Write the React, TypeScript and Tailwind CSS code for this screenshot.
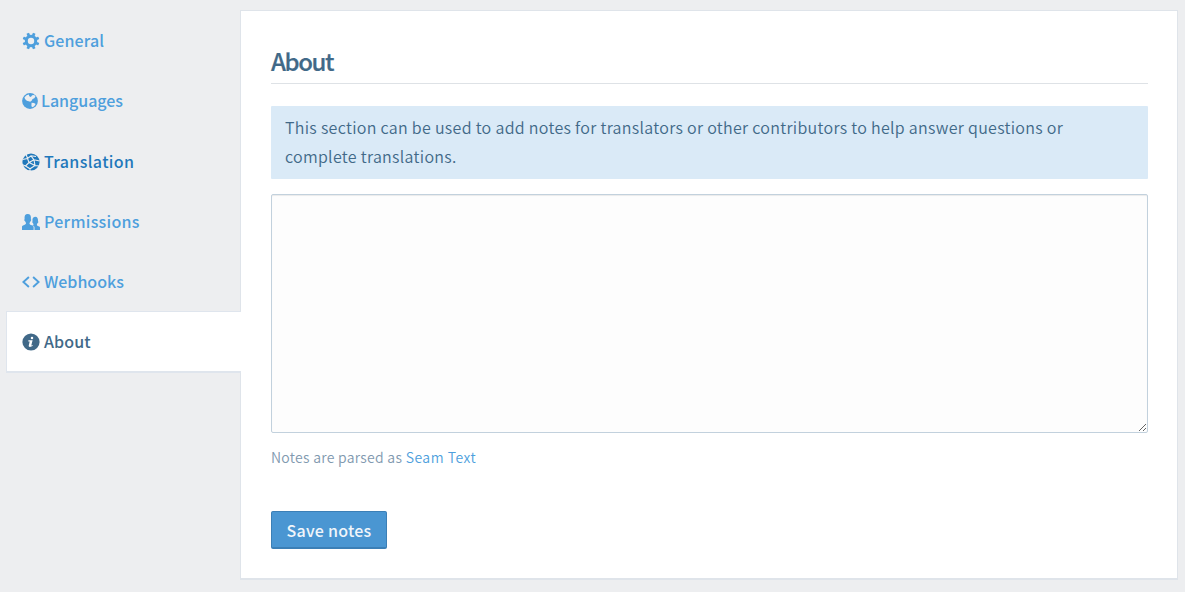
import type { ReactNode } from 'react';

function Gear() {
  return (
    <svg width="18" height="18" viewBox="0 0 18 18" className="shrink-0">
      <g className="fill-current">
        <circle cx="9" cy="9" r="6.200" />
        {[22.5, 67.5, 112.5, 157.5].map((angle) => (
          <rect key={angle} x="7.600" y="0.600" width="2.800" height="16.800" rx="0.500" transform={`rotate(${angle} 9 9)`} />
        ))}
      </g>
      <circle cx="9" cy="9" r="3.200" fill="#edeef0" />
    </svg>
  );
}

function Globe() {
  return (
    <svg width="16" height="18" viewBox="0 0 16 18" className="shrink-0">
      <circle cx="8" cy="9" r="7.900" className="fill-current" />
      <path
        fill="#edeef0"
        d="M4.600 3.300 6.800 2.500 7.300 4.300 8.800 4.900 10.200 3.200 12.200 3 13.500 4.600 12.300 6.300 10.600 6.900 9.600 8.700 8.200 9.800 6.700 9.200 4.800 8.700 3 7 2.500 5.200z"
      />
      <path fill="#edeef0" d="M9.600 10.800 12 10.900 13.600 12.100 12.400 13.900 10.600 15.300 9.400 14.200z" />
    </svg>
  );
}

function Network() {
  return (
    <svg width="18" height="18" viewBox="0 0 18 18" className="relative top-px shrink-0">
      <circle cx="9" cy="9" r="8.600" className="fill-current" />
      <g fill="none" stroke="#edeef0" strokeWidth="1.100">
        <path d="M.5 6.500 5.500 5.500 9 2.800 14 3.500M5.500 5.500 7 9.500 12 6.800 9 2.800M12 6.800 13 12.500 7 9.500 3.500 13 0 11.500M3.500 13 8 15.800 13 12.500 17 13M12 6.800 17.500 8M5.500 5.500 4 1M8 15.800 8 18" />
      </g>
    </svg>
  );
}

function Users() {
  return (
    <svg width="18" height="18" viewBox="0 0 18 18" className="relative top-px shrink-0 fill-current">
      <path d="M0 17v-3.200c0-.8.5-1.200 1.600-1.600 1.700-.6 2.400-1 2.400-1.900 0-.7-.6-1.100-.9-2-.6-.2-.8-.7-.8-1.300 0-.4.100-.6.300-.8C2.200 3 3.200 1.100 5.700 1.100S9.300 3 8.900 6.200c.2.200.3.500.3.900 0 .600-.3 1.100-.8 1.300-.3.900-.9 1.300-.9 2 0 .9.700 1.300 2.400 1.900 1.200.4 1.700.9 1.700 1.700v3z" />
      <path d="M12.500 17h5.500v-2.400c0-.7-.4-1.100-1.400-1.400-1.300-.5-1.700-.9-1.700-1.500 0-.6.5-.900.7-1.600.5-.2.7-.6.7-1.100 0-.3-.1-.5-.3-.700.3-2.700-.7-4.500-2.700-4.500-1.500 0-2.600.9-2.800 2.400-.1.700 0 1.400.1 2.100-.2.200-.3.400-.3.700 0 .5.300.9.600 1.100.2.600.6 1 .6 1.500 0 .5-.2.700-.6 1 1.100.5 1.600 1.100 1.600 2z" />
    </svg>
  );
}

function Code() {
  return (
    <svg width="18" height="18" viewBox="0 0 18 18" className="relative top-px shrink-0 fill-none stroke-current">
      <path strokeWidth="1.900" d="M6.900 4 1.400 9l5.500 5M11.100 4l5.500 5-5.500 5" />
    </svg>
  );
}

function Info() {
  return (
    <svg width="18" height="18" viewBox="0 0 18 18" className="shrink-0">
      <circle cx="9" cy="9" r="8.600" className="fill-current" />
      <circle cx="10" cy="4.900" r="1.250" fill="#fff" />
      <path fill="#fff" d="M6.400 7.300h4.200l-1.200 4.800c-.1.500.2.500 1.200-.2l.3.600c-1.200 1-2.100 1.400-2.900 1.400-1.100 0-1.400-.7-1.200-1.600l.9-3.900H6.300z" />
    </svg>
  );
}

type Item = { label: string; icon: ReactNode; row: string; text?: string };

const items: Item[] = [
  { label: 'General', icon: <Gear />, row: 'gap-1', text: 'pb-0.5 tracking-[0.12px]' },
  { label: 'Languages', icon: <Globe />, row: 'gap-[3px]', text: 'pb-0.5 tracking-[-0.03px]' },
  { label: 'Translation', icon: <Network />, row: 'gap-1 text-[#1f78bb]', text: 'tracking-[0.36px]' },
  { label: 'Permissions', icon: <Users />, row: 'gap-1', text: 'tracking-[0.28px]' },
  { label: 'Webhooks', icon: <Code />, row: 'gap-1' },
];

export default function App() {
  return (
    <div className="flex h-[592px] w-[1185px] bg-[#edeef0] pt-2.5 pl-1.5 font-['Noto_Sans_CJK_SC',sans-serif] text-[#416988]">
      <nav className="z-10 flex w-[235px] shrink-0 flex-col pt-px text-base font-medium text-[#4e9fdd]">
        {items.map((item) => (
          <a key={item.label} href="#" className={`flex h-[60.1px] items-center pl-4 ${item.row}`}>
            {item.icon}
            <span className={item.text}>{item.label}</span>
          </a>
        ))}
        <a href="#" className="flex h-[62px] items-center gap-1 border-t border-b-2 border-l border-[#dfe5ed] bg-white pl-[15px] text-[#416988]">
          <Info />
          <span className="pb-0.5 tracking-[0.1px]">About</span>
        </a>
      </nav>
      <main className="-ml-px h-[570px] w-[938px] border border-b-2 border-[#dfe4ea] bg-white pt-[30px] pr-[29px] pl-[30px]">
        <h1 className="h-[43px] border-b border-[#dee2e6] text-2xl leading-[40px] font-medium tracking-[-1.4px] [-webkit-text-stroke:0.2px_currentColor]">About</h1>
        <p className="mt-[22px] h-[73px] rounded-[1px] bg-[#daeaf7] px-3.5 pt-[7px] text-base leading-[29px] font-[350] tracking-[0.3px]">
          This section can be used to add notes for translators or other contributors to help answer questions or
          <br />
          complete translations.
        </p>
        <textarea
          aria-label="Notes"
          className="mt-[15px] block h-[239px] w-[877px] resize rounded-[2px] border border-[#c2d1dd] bg-[#fdfdfd] shadow-[inset_0_1px_1px_rgba(0,0,0,0.075)]"
        />
        <p className="mt-3 text-sm leading-6 font-[350] tracking-[0.28px] text-[#8199af]">
          Notes are parsed as <a href="#" className="tracking-[0.5px] text-[#4e9fdd]">Seam Text</a>
        </p>
        <button className="mt-[42px] h-[38px] w-[116px] rounded-[2px] border border-b-2 border-[#3b7fb6] bg-[#4a96d2] text-base font-medium tracking-[0.25px] text-[#f0f5fa]">
          Save notes
        </button>
      </main>
    </div>
  );
}
